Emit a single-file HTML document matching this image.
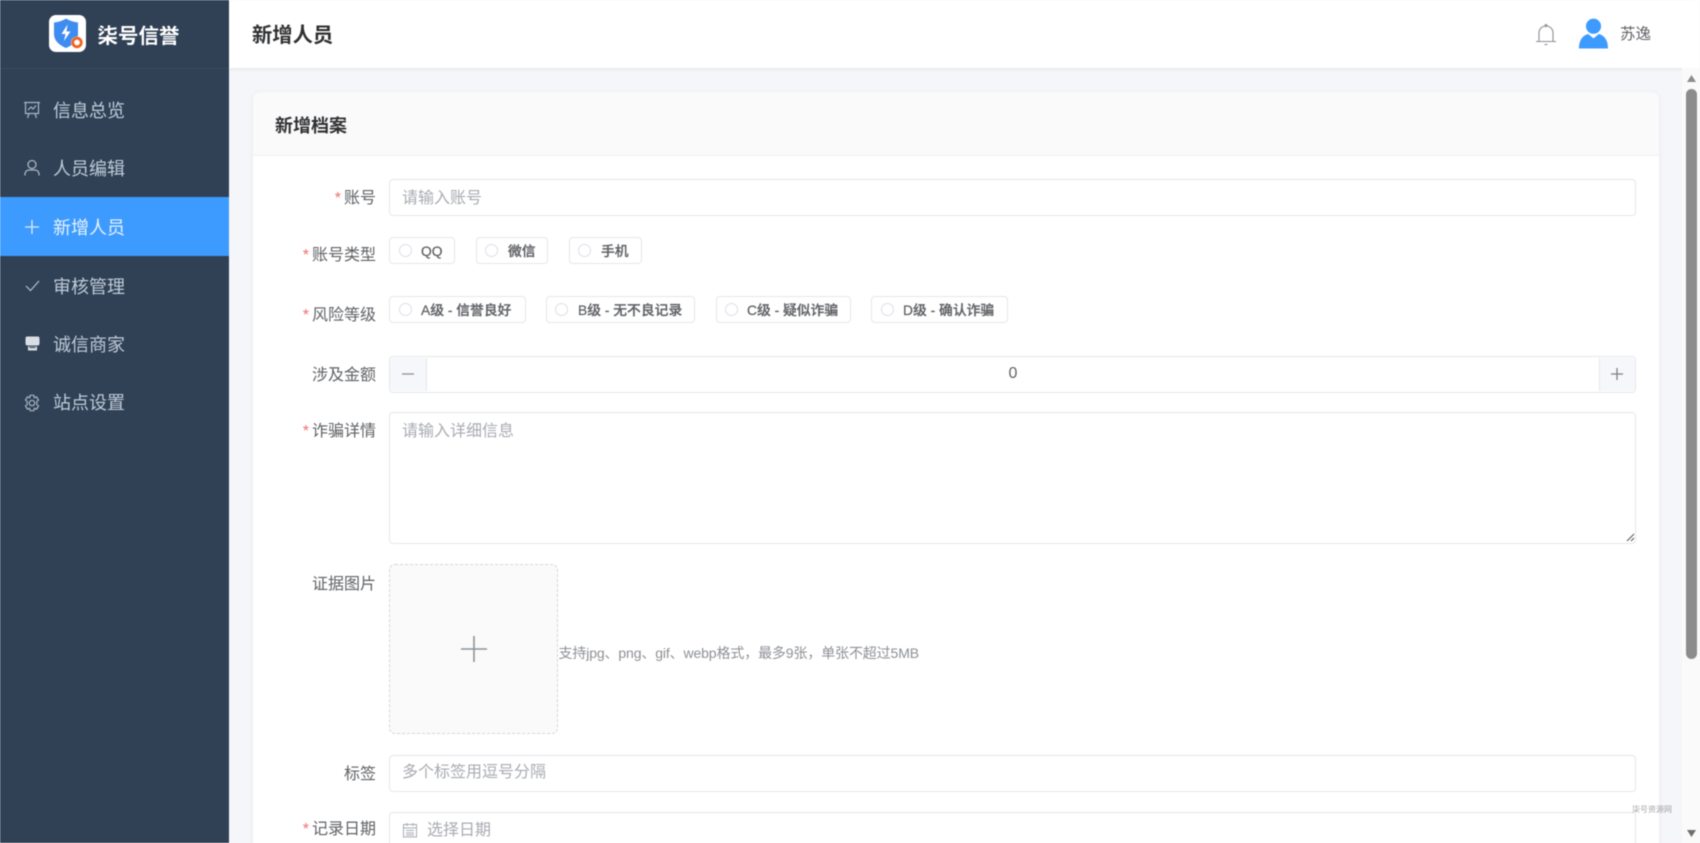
<!DOCTYPE html>
<html lang="zh-CN">
<head>
<meta charset="utf-8">
<title>新增人员</title>
<style>
html,body{margin:0;padding:0;width:1700px;height:843px;overflow:hidden;background:#f5f6fa}
body{font-family:"Liberation Sans","Noto Sans CJK SC",sans-serif;position:relative;filter:blur(.4px)}
div,span,svg{position:absolute;box-sizing:border-box}
.t{white-space:nowrap;line-height:24px;height:24px}
.mi{left:53px;font-size:18px;color:#bfcbd9;line-height:26px;height:26px;white-space:nowrap}
.lab{right:1324px;font-size:16px;color:#606266;line-height:24px;height:24px;white-space:nowrap}
.lab b{font-weight:400;color:#f56c6c;font-size:16px;margin-right:3px}
.inp{left:389px;width:1247px;background:#fff;border:1.5px solid #e4e7ed;border-radius:4px}
.ph{font-size:16px;color:#a8abb2;white-space:nowrap;line-height:24px;height:24px}
.rb{height:27px;background:#fff;border:1px solid #e4e7ed;border-radius:4px}
.rc{width:13px;height:13px;border:1px solid #dcdfe6;border-radius:50%;background:#fff}
.rt{font-size:13.8px;color:#606266;font-weight:500;-webkit-text-stroke:.25px #606266;white-space:nowrap;line-height:20px;height:20px}
</style>
</head>
<body>
<!-- sidebar -->
<div style="left:0;top:0;width:229px;height:843px;background:#304156"></div>
<div style="left:0;top:68px;width:229px;height:1px;background:#3a4b60"></div>
<svg style="left:49px;top:15px" width="37" height="37" viewBox="0 0 37 37">
<rect width="37" height="37" rx="7" fill="#fff"/>
<path d="M5 7.5C10 7 14 5.5 17 3.5 20 5.5 25 7 29 7.5V19C29 26 23 30.5 17 33 11 30.5 5 26 5 19Z" fill="#3f8cf0"/>
<path d="M18.5 9.5 12.5 19H16.5L15 26 21.5 16.5H17.5Z" fill="#fff"/>
<circle cx="28" cy="27.500" r="6" fill="#fff"/>
<circle cx="28" cy="27.500" r="4.300" fill="#fff" stroke="#f0641e" stroke-width="2.800"/>
</svg>
<div class="t" style="left:97.500px;top:24px;font-size:20.5px;font-weight:700;color:#fff;line-height:26px;height:26px">柒号信誉</div>

<div style="left:0;top:197px;width:229px;height:59px;background:#3d9bff"></div>

<svg style="left:23px;top:101px" width="18" height="18" viewBox="0 0 18 18" fill="none" stroke="#aab5c1" stroke-width="1.2"><path d="M1 1.500H17M2.500 1.500V12.500H15.500V1.500M6 12.500 4.500 17M12 12.500 13.500 17"/><path d="M5 9 8 6 10 8 13 4.500"/></svg>
<div class="mi" style="top:98px">信息总览</div>

<svg style="left:23px;top:159px" width="18" height="18" viewBox="0 0 18 18" fill="none" stroke="#aab5c1" stroke-width="1.3"><circle cx="9" cy="5.500" r="4"/><path d="M2 16.500V15C2 12.500 4 11 6 11H12C14 11 16 12.500 16 15V16.500"/></svg>
<div class="mi" style="top:156px">人员编辑</div>

<svg style="left:23px;top:218px" width="18" height="18" viewBox="0 0 18 18" fill="none" stroke="#dcebfb" stroke-width="1.3"><path d="M9 2V16M2 9H16"/></svg>
<div class="mi" style="top:215px;color:#e8f2fd">新增人员</div>

<svg style="left:24px;top:277px" width="17" height="17" viewBox="0 0 17 17" fill="none" stroke="#b5bfca" stroke-width="1.2"><path d="M2 9 6.500 13.500 15 4"/></svg>
<div class="mi" style="top:273.500px">审核管理</div>

<svg style="left:24px;top:335px" width="17" height="17" viewBox="0 0 17 17"><path d="M3 1.500H14C15 1.500 15.500 2.500 15.500 3.500V8.500C15.500 10 14.500 10.500 13.500 10.500H3.500C2.500 10.500 1.500 10 1.500 8.500V3.500C1.500 2.500 2 1.500 3 1.500Z" fill="#d9dee4"/><path d="M4 11.500H13V15.500H4Z" fill="#d9dee4"/><path d="M5.500 12.500H11.500" stroke="#304156" stroke-width="1"/></svg>
<div class="mi" style="top:332px">诚信商家</div>

<svg style="left:23px;top:394px" width="18" height="18" viewBox="0 0 18 18" fill="none" stroke="#aab5c1" stroke-width="1.2"><path d="M7.200 1.300H10.800L11.400 3.700 13.600 2.900 15.500 6 13.800 7.600V10.400L15.500 12 13.600 15.100 11.400 14.300 10.800 16.700H7.200L6.600 14.300 4.400 15.100 2.500 12 4.200 10.400V7.600L2.500 6 4.400 2.900 6.600 3.700Z"/><circle cx="9" cy="9" r="2.700"/></svg>
<div class="mi" style="top:390px">站点设置</div>

<!-- header -->
<div style="left:229px;top:0;width:1471px;height:68px;background:#fff;box-shadow:0 1px 4px rgba(0,21,41,.08)"></div>
<div class="t" style="left:252px;top:22px;font-size:20.300px;font-weight:700;color:#303133;line-height:28px;height:28px">新增人员</div>
<svg style="left:1535px;top:23px" width="22" height="23" viewBox="0 0 22 23" fill="none" stroke="#8d9095" stroke-width="1.1"><path d="M1 18.500H21M4 18.500V10C4 6 7 3 11 3 15 3 18 6 18 10V18.500"/><circle cx="11" cy="2.500" r="1"/><path d="M9.500 21.500H12.500"/></svg>
<svg style="left:1578px;top:18px" width="31" height="31" viewBox="0 0 32 31"><circle cx="16" cy="8" r="7.800" fill="#3d9bff"/><path d="M1 31C1 22 5 17.500 10.500 16L16 20.500 21.500 16C27 17.500 31 22 31 31Z" fill="#3d9bff"/></svg>
<div class="t" style="left:1620px;top:23px;font-size:15.500px;color:#606266">苏逸</div>

<!-- scrollbar -->
<div style="left:1682px;top:68px;width:18px;height:775px;background:#fafafa"></div>
<div style="left:1686px;top:89px;width:11px;height:570px;background:#8c8c8c;border-radius:5.500px"></div>
<svg style="left:1686px;top:74px" width="11" height="9" viewBox="0 0 11 9"><path d="M5.500 1 10 8H1Z" fill="#8c8c8c"/></svg>
<svg style="left:1686px;top:829px" width="11" height="9" viewBox="0 0 11 9"><path d="M5.500 8 10 1H1Z" fill="#6e6e6e"/></svg>

<!-- card -->
<div style="left:253px;top:92px;width:1406px;height:760px;background:#fff;border-radius:8px;box-shadow:0 1px 6px rgba(0,0,0,.06)"></div>
<div style="left:253px;top:92px;width:1406px;height:64px;background:#fafafa;border-radius:8px 8px 0 0;border-bottom:1px solid #f0f0f0"></div>
<div class="t" style="left:275px;top:113px;font-size:18px;font-weight:700;color:#303133;line-height:26px;height:26px">新增档案</div>

<!-- row: account -->
<div class="lab" style="top:186.500px"><b>*</b>账号</div>
<div class="inp" style="top:179px;height:37px"></div>
<div class="ph" style="left:402px;top:186.500px">请输入账号</div>

<!-- row: type -->
<div class="lab" style="top:244px"><b>*</b>账号类型</div>
<div class="rb" style="left:389px;top:237px;width:66px"></div>
<div class="rc" style="left:398.500px;top:244px"></div>
<div class="rt" style="left:421px;top:241.500px">QQ</div>
<div class="rb" style="left:476px;top:237px;width:72px"></div>
<div class="rc" style="left:484.500px;top:244px"></div>
<div class="rt" style="left:508px;top:241.500px">微信</div>
<div class="rb" style="left:569px;top:237px;width:73px"></div>
<div class="rc" style="left:578px;top:244px"></div>
<div class="rt" style="left:601px;top:241.500px">手机</div>

<!-- row: risk -->
<div class="lab" style="top:303.500px"><b>*</b>风险等级</div>
<div class="rb" style="left:389px;top:296px;width:137px"></div>
<div class="rc" style="left:398.500px;top:303px"></div>
<div class="rt" style="left:421px;top:300.500px">A级 - 信誉良好</div>
<div class="rb" style="left:546px;top:296px;width:149px"></div>
<div class="rc" style="left:555px;top:303px"></div>
<div class="rt" style="left:578px;top:300.500px">B级 - 无不良记录</div>
<div class="rb" style="left:716px;top:296px;width:135px"></div>
<div class="rc" style="left:724.500px;top:303px"></div>
<div class="rt" style="left:747px;top:300.500px">C级 - 疑似诈骗</div>
<div class="rb" style="left:871px;top:296px;width:137px"></div>
<div class="rc" style="left:880.500px;top:303px"></div>
<div class="rt" style="left:903px;top:300.500px">D级 - 确认诈骗</div>

<!-- row: amount -->
<div class="lab" style="top:363.500px">涉及金额</div>
<div class="inp" style="top:356px;height:36.500px"></div>
<div style="left:390px;top:357.500px;width:37px;height:33.500px;background:#f5f7fa;border-right:1px solid #e4e7ed;border-radius:4px 0 0 4px"></div>
<div style="left:1599px;top:357.500px;width:36px;height:33.500px;background:#f5f7fa;border-left:1px solid #e4e7ed;border-radius:0 4px 4px 0"></div>
<svg style="left:401px;top:367px" width="14" height="14" viewBox="0 0 14 14"><path d="M1 7H13" stroke="#8d9095" stroke-width="1.3"/></svg>
<svg style="left:1610px;top:367px" width="14" height="14" viewBox="0 0 14 14"><path d="M1 7H13M7 1V13" stroke="#7d8085" stroke-width="1.3"/></svg>
<div class="t" style="left:1008.500px;top:362px;font-size:16px;color:#606266">0</div>

<!-- row: details -->
<div class="lab" style="top:420px"><b>*</b>诈骗详情</div>
<div class="inp" style="top:412px;height:132px"></div>
<div class="ph" style="left:402px;top:420px">请输入详细信息</div>
<svg style="left:1626px;top:533px" width="9" height="9" viewBox="0 0 9 9" fill="none" stroke="#555" stroke-width="1"><path d="M1 8 8 1M5 8 8 5"/></svg>

<!-- row: upload -->
<div class="lab" style="top:572.500px">证据图片</div>
<div style="left:389px;top:564px;width:169px;height:170px;background:#fafafa;border:1px dashed #d4d7de;border-radius:6px"></div>
<svg style="left:460px;top:635px" width="28" height="28" viewBox="0 0 28 28"><path d="M1 14H27M14 1V27" stroke="#8c939d" stroke-width="1.6"/></svg>
<div class="t" style="left:558.500px;top:641px;font-size:14px;color:#8d9095;letter-spacing:-.13px">支持jpg、png、gif、webp格式，最多9张，单张不超过5MB</div>

<!-- row: tags -->
<div class="lab" style="top:762.500px">标签</div>
<div class="inp" style="top:755px;height:37px"></div>
<div class="ph" style="left:402px;top:761px">多个标签用逗号分隔</div>

<!-- row: date -->
<div class="lab" style="top:818px"><b>*</b>记录日期</div>
<div class="inp" style="top:812px;height:60px"></div>
<svg style="left:402px;top:822px" width="16" height="16" viewBox="0 0 16 16" fill="none" stroke="#a8abb2" stroke-width="1"><rect x="1.500" y="2.500" width="13" height="12.500"/><path d="M1.500 6H14.500M5 1V4M11 1V4M4 8.500H12M4 11H12M4 13H12"/></svg>
<div class="ph" style="left:427px;top:818.500px">选择日期</div>

<!-- watermark -->
<div class="t" style="left:1632px;top:798px;font-size:8px;color:#a5a5a5">柒号资源网</div>
</body>
</html>
